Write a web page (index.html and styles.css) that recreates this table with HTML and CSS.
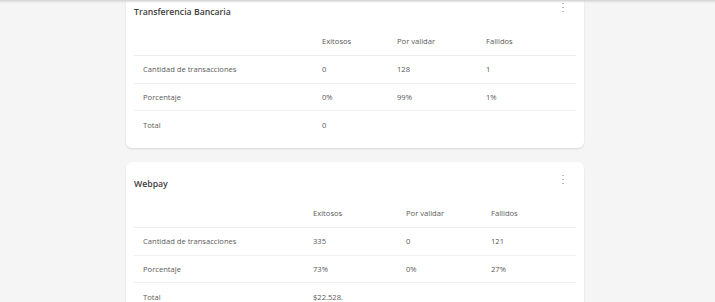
FILE: index.html
```html
<!DOCTYPE html>
<html lang="es">
<head>
<meta charset="utf-8">
<link rel="stylesheet" href="styles.css">
</head>
<body>
<div class="topshadow"></div>
<main class="page">
  <section class="card card-first">
    <div class="card-head">
      <h2 class="title">Transferencia Bancaria</h2>
      <span class="kebab"><i></i><i></i><i></i></span>
    </div>
    <table class="tbl t1">
      <colgroup><col class="c1"><col class="c2"><col class="c3"><col class="c4"></colgroup>
      <thead><tr><th></th><th>Exitosos</th><th>Por validar</th><th>Fallidos</th></tr></thead>
      <tbody>
        <tr><td>Cantidad de transacciones</td><td>0</td><td>128</td><td>1</td></tr>
        <tr><td>Porcentaje</td><td>0%</td><td>99%</td><td>1%</td></tr>
        <tr class="last"><td>Total</td><td>0</td><td></td><td></td></tr>
      </tbody>
    </table>
  </section>
  <section class="card">
    <div class="card-head">
      <h2 class="title">Webpay</h2>
      <span class="kebab"><i></i><i></i><i></i></span>
    </div>
    <table class="tbl t2">
      <colgroup><col class="c1"><col class="c2"><col class="c3"><col class="c4"></colgroup>
      <thead><tr><th></th><th>Exitosos</th><th>Por validar</th><th>Fallidos</th></tr></thead>
      <tbody>
        <tr><td>Cantidad de transacciones</td><td>335</td><td>0</td><td>121</td></tr>
        <tr><td>Porcentaje</td><td>73%</td><td>0%</td><td>27%</td></tr>
        <tr class="last"><td>Total</td><td>$22.528.</td><td></td><td></td></tr>
      </tbody>
    </table>
  </section>
</main>
</body>
</html>
```
FILE: styles.css
```css
* { box-sizing: border-box; }
html, body { margin: 0; padding: 0; }
body {
  background: #f5f5f5;
  font-family: "Open Sans", "Noto Sans", sans-serif;
  color: #5a5a5a;
  overflow: hidden;
  height: 302px;
}
.topshadow {
  position: fixed;
  left: 0; right: 0; top: 0;
  height: 3px;
  background: linear-gradient(#d0d0d0, rgba(220,220,220,0));
  z-index: 5;
}
.page {
  width: 458px;
  margin-left: 126px;
  display: flex;
  flex-direction: column;
  gap: 14px;
}
.card {
  background: #fff;
  border-radius: 6px;
  box-shadow: 0 1px 2px rgba(0,0,0,0.12);
  padding: 16px 8px 10px;
}
.card-first { margin-top: -10px; }
.card-head {
  display: flex;
  justify-content: space-between;
  align-items: flex-start;
}
.title {
  margin: 0;
  font-size: 8.7px;
  line-height: 12px;
  font-weight: 600;
  color: #3d3d3d;
}
.kebab {
  display: flex;
  flex-direction: column;
  gap: 2.6px;
  margin-right: 12.5px;
  margin-top: -3px;
}
.kebab i {
  display: block;
  width: 1.4px;
  height: 1.4px;
  background: #b5b5b5;
  border-radius: 50%;
}
.tbl {
  width: 100%;
  border-collapse: collapse;
  table-layout: fixed;
  margin-top: 6px;
  font-size: 7.6px;
}
.tbl th {
  font-weight: 400;
  text-align: left;
  height: 31.5px;
  padding: 2px 9px 0;
  border-bottom: 1px solid #ececec;
  color: #5a5a5a;
}
.tbl td {
  height: 27.5px;
  padding: 0 9px;
  border-bottom: 1px solid #efefef;
}
.tbl tr.last td { border-bottom: none; }
.t1 .c1 { width: 179px; }
.t1 .c2 { width: 75px; }
.t1 .c3 { width: 89px; }
.t1 .c4 { width: 99px; }
.t2 .c1 { width: 170px; }
.t2 .c2 { width: 93px; }
.t2 .c3 { width: 85px; }
.t2 .c4 { width: 94px; }
```
